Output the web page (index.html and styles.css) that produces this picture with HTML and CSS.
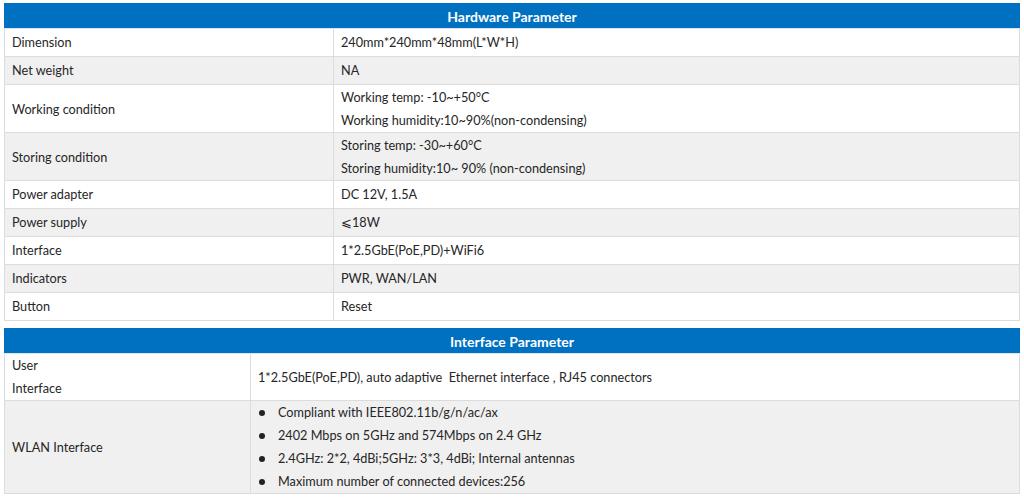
FILE: index.html
```html
<!DOCTYPE html>
<html>
<head>
<meta charset="utf-8">
<link rel="stylesheet" href="styles.css">
</head>
<body>
<table class="spec hw">
  <colgroup><col class="c1"><col></colgroup>
  <thead><tr><th colspan="2">Hardware Parameter</th></tr></thead>
  <tbody>
    <tr class="single"><td>Dimension</td><td>240mm*240mm*48mm(L*W*H)</td></tr>
    <tr class="single alt"><td>Net weight</td><td>NA</td></tr>
    <tr class="multi"><td>Working condition</td><td><div>Working temp: -10~+50°C</div><div>Working humidity:10~90%(non-condensing)</div></td></tr>
    <tr class="multi alt"><td>Storing condition</td><td><div>Storing temp: -30~+60°C</div><div>Storing humidity:10~ 90% (non-condensing)</div></td></tr>
    <tr class="single"><td>Power adapter</td><td>DC 12V, 1.5A</td></tr>
    <tr class="single alt"><td>Power supply</td><td>⩽18W</td></tr>
    <tr class="single"><td>Interface</td><td>1*2.5GbE(PoE,PD)+WiFi6</td></tr>
    <tr class="single alt"><td>Indicators</td><td>PWR, WAN/LAN</td></tr>
    <tr class="single"><td>Button</td><td>Reset</td></tr>
  </tbody>
</table>
<table class="spec ifp">
  <colgroup><col class="c1"><col></colgroup>
  <thead><tr><th colspan="2">Interface Parameter</th></tr></thead>
  <tbody>
    <tr><td><div>User</div><div>Interface</div></td><td>1*2.5GbE(PoE,PD), auto adaptive&nbsp; Ethernet interface , RJ45 connectors</td></tr>
    <tr class="alt"><td>WLAN Interface</td><td>
      <ul class="bullets">
        <li><span class="dot"></span>Compliant with IEEE802.11b/g/n/ac/ax</li>
        <li><span class="dot"></span>2402 Mbps on 5GHz and 574Mbps on 2.4 GHz</li>
        <li><span class="dot"></span>2.4GHz: 2*2, 4dBi;5GHz: 3*3, 4dBi; Internal antennas</li>
        <li><span class="dot"></span>Maximum number of connected devices:256</li>
      </ul>
    </td></tr>
  </tbody>
</table>
</body>
</html>
```
FILE: styles.css
```css
html, body { margin: 0; background: #fff; }
body {
  padding: 3px 4px 0 4px;
  font-family: Lato, "Liberation Sans", sans-serif;
  font-size: 12.7px;
  color: #262626;
}
.spec {
  width: 1016px;
  border-collapse: collapse;
  table-layout: fixed;
}
.hw .c1 { width: 329px; }
.ifp { margin-top: 7px; }
.ifp .c1 { width: 246px; }
.spec th {
  background: #0070c0;
  color: #fff;
  font-weight: bold;
  font-size: 14px;
  height: 24px;
  padding: 0;
  text-align: center;
  border: 1px solid #0070c0;
  border-bottom: 1px solid #d9e6f2;
}
.spec td {
  border: 1px solid #dcdcdc;
  padding: 0 7px;
  line-height: 23px;
  vertical-align: middle;
  text-align: left;
}
.spec tr.single td { height: 27px; }
.spec tr.multi td { padding-top: 1px; }
.spec tr.alt td { background: #f0f0f0; }
.bullets { list-style: none; margin: 0; padding: 0; }
.bullets li { display: flex; align-items: center; }
.dot {
  width: 6px; height: 6px; border-radius: 50%;
  background: #222;
  margin: 0 13px 0 1px;
  flex: none;
}
```
